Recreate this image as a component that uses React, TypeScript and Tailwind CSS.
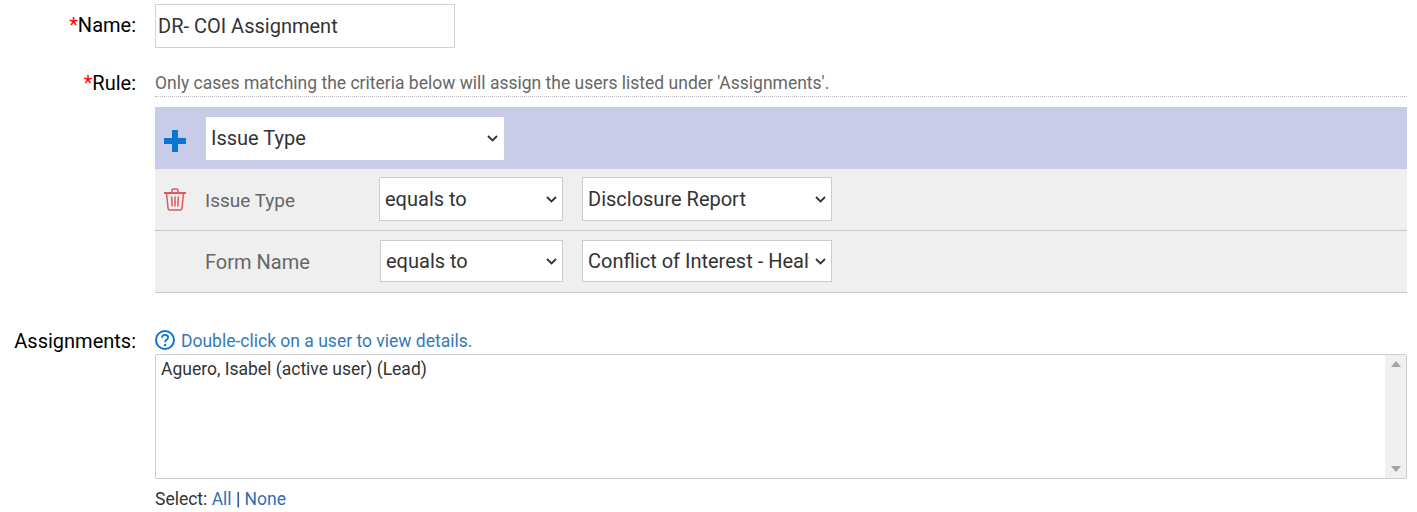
import React from 'react';

const Label: React.FC<{ text: string; required?: boolean }> = ({ text, required }) => (
  <div className="w-[136px] shrink-0 text-right text-[20px] leading-[24px] text-black">
    {required && <span className="text-[#ff0000]">*</span>}
    {text}:
  </div>
);

// native arrow can't be moved, so the chevron is drawn over the select
const Select: React.FC<{ value: string; className: string; border?: boolean }> = ({ value, className, border = true }) => (
  <div className={`relative ${className}`}>
    <select
      className={`block h-full w-full appearance-none bg-white pl-[5px] pr-[22px] text-[20px] text-[#333333] outline-none ${border ? 'border border-[#cccccc]' : ''}`}
      defaultValue={value}
    >
      <option>{value}</option>
    </select>
    <svg className="pointer-events-none absolute right-[6px] top-1/2 -mt-[3px]" width="11" height="7" viewBox="0 0 11 7" fill="none" stroke="#333333" strokeWidth="1.8">
      <path d="M1 1l4.5 4.5L10 1" />
    </svg>
  </div>
);

const FilterRow: React.FC<{ label: string; value: string; trash?: boolean }> = ({ label, value, trash }) => (
  <div className="flex h-[62px] border-b border-[#c8c8c8] bg-[#efefef]">
    <div className="flex w-[50px] shrink-0 items-center pl-[9px]">
      {trash && (
        <svg width="22" height="23" viewBox="0 0 22 23" fill="none" stroke="#e2575c" strokeWidth="1.5">
          <path d="M0 5h22" strokeWidth="2" />
          <path d="M8 4.5V2.2C8 1.5 8.5 1 9.2 1h3.6c.7 0 1.2.5 1.2 1.2v2.3" />
          <path d="M2.5 5.5l1.6 15c.1.9.7 1.5 1.6 1.5h10.6c.9 0 1.5-.6 1.6-1.5l1.6-15" />
          <path d="M7.6 8.5l.6 10M11 8.5v10M14.4 8.5l-.6 10" />
        </svg>
      )}
    </div>
    {trash ? (
      <>
        <div className="flex w-[174px] shrink-0 items-center pt-[3px] text-[19px] text-[#666666]">{label}</div>
        <Select value="equals to" className="mt-[8px] h-[44px] w-[184px]" />
        <Select value={value} className="ml-[19px] mt-[8px] h-[44px] w-[250px]" />
      </>
    ) : (
      <>
        <div className="flex w-[175px] shrink-0 items-center pt-[1px] text-[20px] text-[#666666]">{label}</div>
        <Select value="equals to" className="mt-[9px] h-[42px] w-[183px]" />
        <Select value={value} className="ml-[19px] mt-[9px] h-[42px] w-[250px]" />
      </>
    )}
  </div>
);

const App: React.FC = () => {
  return (
    <div className="h-[512px] w-[1417px] overflow-hidden bg-white pl-0 pr-[10px] pt-[4px] font-['Roboto',sans-serif]">
      <div className="flex gap-[19px]">
        <div className="pt-[9px]"><Label text="Name" required /></div>
        <input
          readOnly
          value="DR- COI Assignment"
          className="h-[44px] w-[300px] border border-[#cdd3db] bg-white px-[2px] text-[20px] text-[#333333] outline-none"
        />
      </div>

      <div className="mt-[22px] flex gap-[19px]">
        <div className="pt-[1px]"><Label text="Rule" required /></div>
        <div className="min-w-0 flex-1">
          <div className="h-[27px] border-b border-dotted border-[#bbbbbb] pt-[1px] text-[17.5px] leading-[24px] text-[#666666]">
            Only cases matching the criteria below will assign the users listed under 'Assignments'.
          </div>
          <div className="mt-[10px] flex h-[62px] items-center bg-[#c8cce9]">
            <div className="w-[51px] shrink-0 pl-[9px] pt-[5px]">
              <svg className="block" width="22" height="22" viewBox="0 0 22 22" fill="#0a76d3">
                <path d="M8 0h6v8h8v6h-8v8H8v-8H0V8h8z" />
              </svg>
            </div>
            <Select value="Issue Type" className="h-[43px] w-[298px]" border={false} />
          </div>
          <FilterRow label="Issue Type" value="Disclosure Report" trash />
          <FilterRow label="Form Name" value="Conflict of Interest - Healthcare" />
        </div>
      </div>

      <div className="mt-[35px] flex gap-[19px]">
        <div className="pt-[1px]"><Label text="Assignments" /></div>
        <div className="min-w-0 flex-1">
          <div className="flex h-[24px] items-center gap-[6px] text-[17.5px] text-[#337ab7]">
            <svg width="20" height="20" viewBox="0 0 20 20" fill="none">
              <circle cx="10" cy="10" r="9" stroke="#0a76d3" strokeWidth="2" />
              <path d="M7 7.8c0-1.8 1.3-3 3.1-3 1.7 0 3 1.1 3 2.6 0 2.3-3 2.4-3 4.8" stroke="#0a76d3" strokeWidth="1.8" />
              <circle cx="10.1" cy="14.9" r="1.2" fill="#0a76d3" />
            </svg>
            <span className="pt-[2px]">Double-click on a user to view details.</span>
          </div>
          <div className="mt-[2px] flex h-[125px] rounded-[2px] border border-[#cccccc] bg-white">
            <div className="flex-1 px-[5px] pt-[2px] text-[17.5px] leading-[24px] text-[#333333]">
              Aguero, Isabel (active user) (Lead)
            </div>
            <div className="flex w-[21px] flex-col items-center justify-between bg-[#f0f0f0] py-[6px] pl-[1px]">
              <svg width="10" height="6" viewBox="0 0 10 6" fill="#a3a3a3"><path d="M5 0l5 6H0z" /></svg>
              <svg width="10" height="6" viewBox="0 0 10 6" fill="#a3a3a3"><path d="M0 0h10L5 6z" /></svg>
            </div>
          </div>
          <div className="mt-[8px] text-[17.5px] leading-[24px] text-[#333333]">
            Select: <span className="text-[#2f6fb3]">All</span> | <span className="text-[#2f6fb3]">None</span>
          </div>
        </div>
      </div>
    </div>
  );
};

export default App;
